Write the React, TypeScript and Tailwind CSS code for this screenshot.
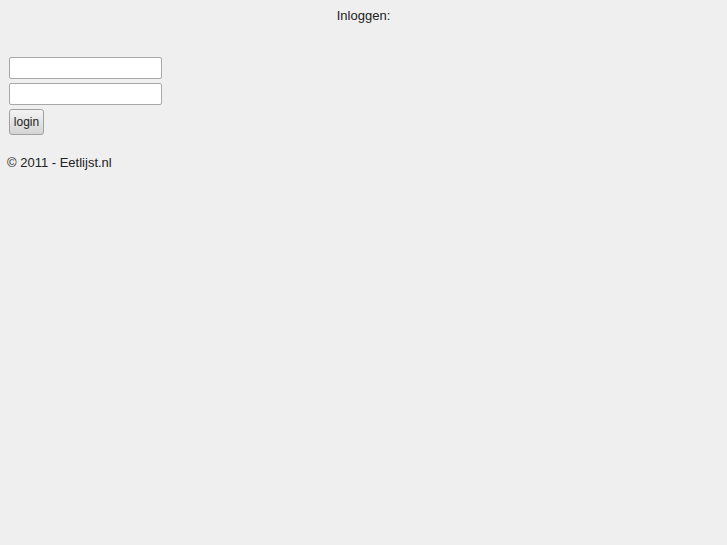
export default function App() {
  return (
    <div className="min-h-[545px] bg-[#efefef] text-[13px] text-[#222] font-['Liberation_Sans',sans-serif]">
      <div className="pt-[8px] text-center leading-[16px]">Inloggen:</div>
      <form className="mt-[33px] ml-[9px] flex flex-col items-start gap-[4px]">
        <input type="text" className="w-[153px] h-[22px] bg-white border border-[#a8a8a8] rounded-[2px] px-1" />
        <input type="password" className="w-[153px] h-[22px] bg-white border border-[#a8a8a8] rounded-[2px] px-1" />
        <button
          type="button"
          className="h-[26px] w-[35px] border border-[#a0a0a0] rounded-[3px] bg-gradient-to-b from-[#f4f4f4] to-[#d4d4d4] text-[12px]"
        >
          login
        </button>
      </form>
      <div className="mt-[20px] ml-[7px] leading-[16px]">© 2011 - Eetlijst.nl</div>
    </div>
  )
}
